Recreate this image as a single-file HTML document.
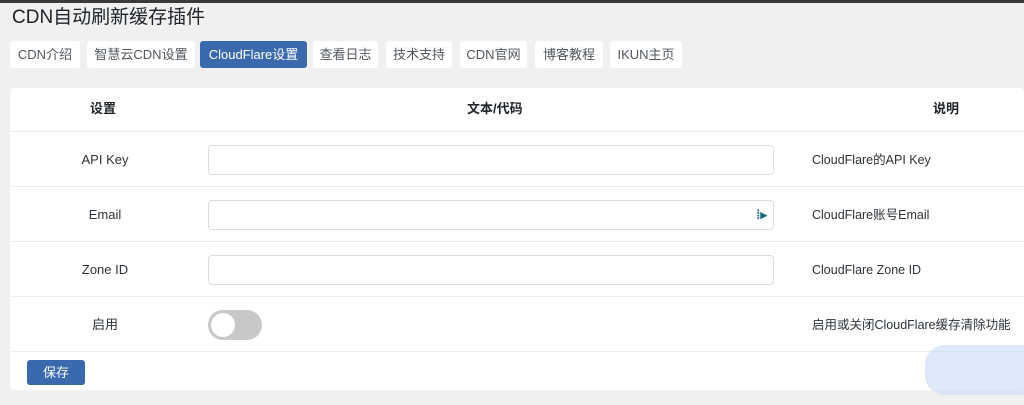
<!DOCTYPE html>
<html><head><meta charset="utf-8"><style>
*{box-sizing:border-box;margin:0;padding:0}
body{width:1024px;height:405px;background:#f0f0f1;font-family:"Liberation Sans","Noto Sans CJK SC",sans-serif;color:#1d2327;position:relative;overflow:hidden}
.top{position:absolute;left:0;top:0;width:1024px;height:3px;background:#3a3a3a}
h1{position:absolute;left:12px;top:6px;font-size:19px;font-weight:400;color:#1d2327;line-height:24px}
.tab{position:absolute;top:41px;height:27px;background:#fff;border-radius:3px;font-size:13px;color:#50575e;line-height:27px;text-align:center}
.tab.a{background:#3a6aad;color:#fff}
.card{position:absolute;left:10px;top:88px;width:1014px;height:302px;background:#fff;border-radius:4px}
.row{position:absolute;left:0;width:1014px;border-bottom:1px solid #ececec}
.h{font-weight:bold;font-size:13px;position:absolute;top:101px;line-height:16px}
.lab{position:absolute;font-size:13px;color:#2c3338;width:190px;text-align:center;left:10px;line-height:16px}
.inp{position:absolute;left:208px;width:566px;height:30px;border:1px solid #dcdcde;border-radius:4px;background:#fff}
.desc{position:absolute;left:812px;font-size:12.5px;color:#2c3338;line-height:16px}
.tog{position:absolute;left:208px;top:310px;width:54px;height:30px;border-radius:15px;background:#c8c8c8}
.tog::after{content:"";position:absolute;left:3px;top:3px;width:24px;height:24px;border-radius:50%;background:#fff}
.btn{position:absolute;left:27px;top:360px;width:58px;height:25px;background:#3a6aad;color:#fff;border-radius:3px;font-size:13px;line-height:25px;text-align:center}
</style></head><body>
<div class="top"></div>
<h1>CDN自动刷新缓存插件</h1>
<div class="tab" style="left:10px;width:70px">CDN介绍</div>
<div class="tab" style="left:87px;width:108px">智慧云CDN设置</div>
<div class="tab a" style="left:200px;width:107px">CloudFlare设置</div>
<div class="tab" style="left:313px;width:65px">查看日志</div>
<div class="tab" style="left:386px;width:66px">技术支持</div>
<div class="tab" style="left:460px;width:67px">CDN官网</div>
<div class="tab" style="left:535px;width:68px">博客教程</div>
<div class="tab" style="left:610px;width:72px">IKUN主页</div>
<div class="card">
<div class="row" style="top:0;height:44px"></div>
<div class="row" style="top:44px;height:55px"></div>
<div class="row" style="top:99px;height:55px"></div>
<div class="row" style="top:154px;height:55px"></div>
<div class="row" style="top:209px;height:55px"></div>
</div>
<div class="h" style="left:90px">设置</div>
<div class="h" style="left:467px">文本/代码</div>
<div class="h" style="left:933px">说明</div>
<div class="lab" style="top:152px">API Key</div>
<div class="lab" style="top:207px">Email</div>
<div class="lab" style="top:262px">Zone ID</div>
<div class="lab" style="top:317px">启用</div>
<div class="inp" style="top:145px"></div>
<div class="inp" style="top:200px"><span style="position:absolute;right:6px;top:6px;font-size:13px;color:#1a6b7a;font-weight:bold">⁞▸</span></div>
<div class="inp" style="top:255px"></div>
<div class="tog"></div>
<div class="desc" style="top:152px">CloudFlare的API Key</div>
<div class="desc" style="top:207px">CloudFlare账号Email</div>
<div class="desc" style="top:262px">CloudFlare Zone ID</div>
<div class="desc" style="top:317px">启用或关闭CloudFlare缓存清除功能</div>
<div class="btn">保存</div>
<div style="position:absolute;left:925px;top:345px;width:99px;height:50px;background:#cfe0f5;opacity:.7;border-radius:20px 0 0 20px"></div>
</body></html>
